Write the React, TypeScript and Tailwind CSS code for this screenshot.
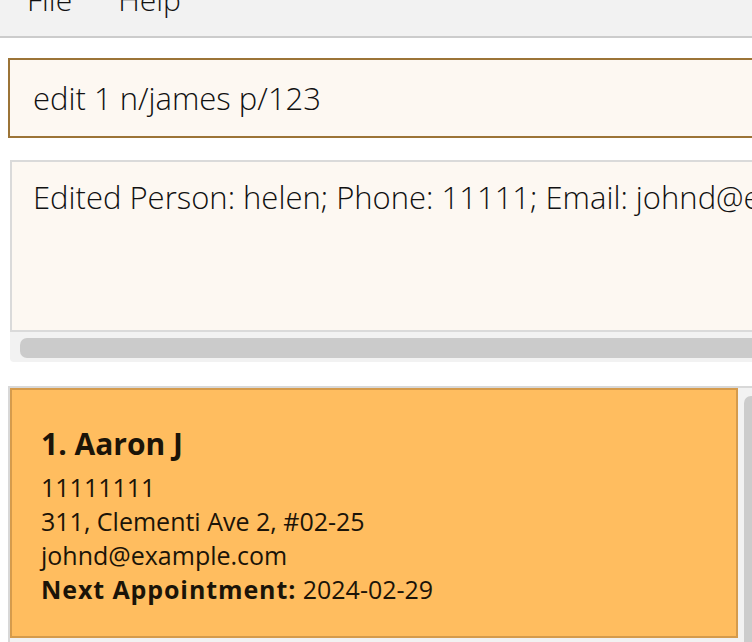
import React from "react";

export default function App() {
  return (
    <div
      className="w-[752px] h-[642px] overflow-hidden bg-white text-[#111111]"
      style={{ fontFamily: '"Open Sans", "Noto Sans", sans-serif' }}
    >
      {/* Menu bar */}
      <div className="h-[38px] bg-[#f2f2f2] border-b-2 border-[#cccccc] overflow-hidden">
        <div className="flex mt-[-20px] pl-[27px] gap-[46px] text-[30px] leading-[40px] font-light">
          <span>File</span>
          <span>Help</span>
        </div>
      </div>

      {/* Command box */}
      <div className="mt-[20px] ml-[8px] w-[780px] h-[80px] border-2 border-[#9c7437] bg-[#fdf8f2]">
        <div className="pt-[18px] pl-[23px] text-[31px] leading-[40px] font-light whitespace-nowrap">
          edit 1 n/james p/123
        </div>
      </div>

      {/* Result display */}
      <div className="mt-[22px] ml-[10px] w-[780px]">
        <div className="h-[172px] border-2 border-[#dadada] bg-[#fdf8f2] overflow-hidden">
          <div className="pt-[15px] pl-[21px] text-[31px] leading-[40px] font-light whitespace-nowrap">
            Edited Person: helen; Phone: 11111; Email: johnd@example.com
          </div>
        </div>
        <div className="h-[30px] bg-[#f2f2f2] rounded-bl-[4px] pt-[6px] pl-[10px]">
          <div className="h-[20px] rounded-[7px] bg-[#cbcbcb]" />
        </div>
      </div>

      {/* Person list */}
      <div className="mt-[24px] ml-[8px] h-[300px] border-l-2 border-t-2 border-[#d8d8d8] bg-[#f2f2f2] flex">
        <div className="w-[728px] h-[250px] border-2 border-[#d59b4c] bg-[#ffbd5f] text-[#1b1408] pl-[29px] pt-[34px]">
          <div className="text-[30px] leading-[40px] font-bold">1. Aaron J</div>
          <div className="mt-[6px] text-[25px] leading-[34px]">11111111</div>
          <div className="text-[25px] leading-[34px]">311, Clementi Ave 2, #02-25</div>
          <div className="text-[25px] leading-[34px]">johnd@example.com</div>
          <div className="text-[25px] leading-[34px] whitespace-nowrap">
            <span className="font-bold tracking-[0.9px]">Next Appointment:</span> 2024-02-29
          </div>
        </div>
        <div className="ml-[6px] mt-[8px] flex-1 h-[300px] bg-[#cccccc] rounded-tl-[7px]" />
      </div>
    </div>
  );
}
